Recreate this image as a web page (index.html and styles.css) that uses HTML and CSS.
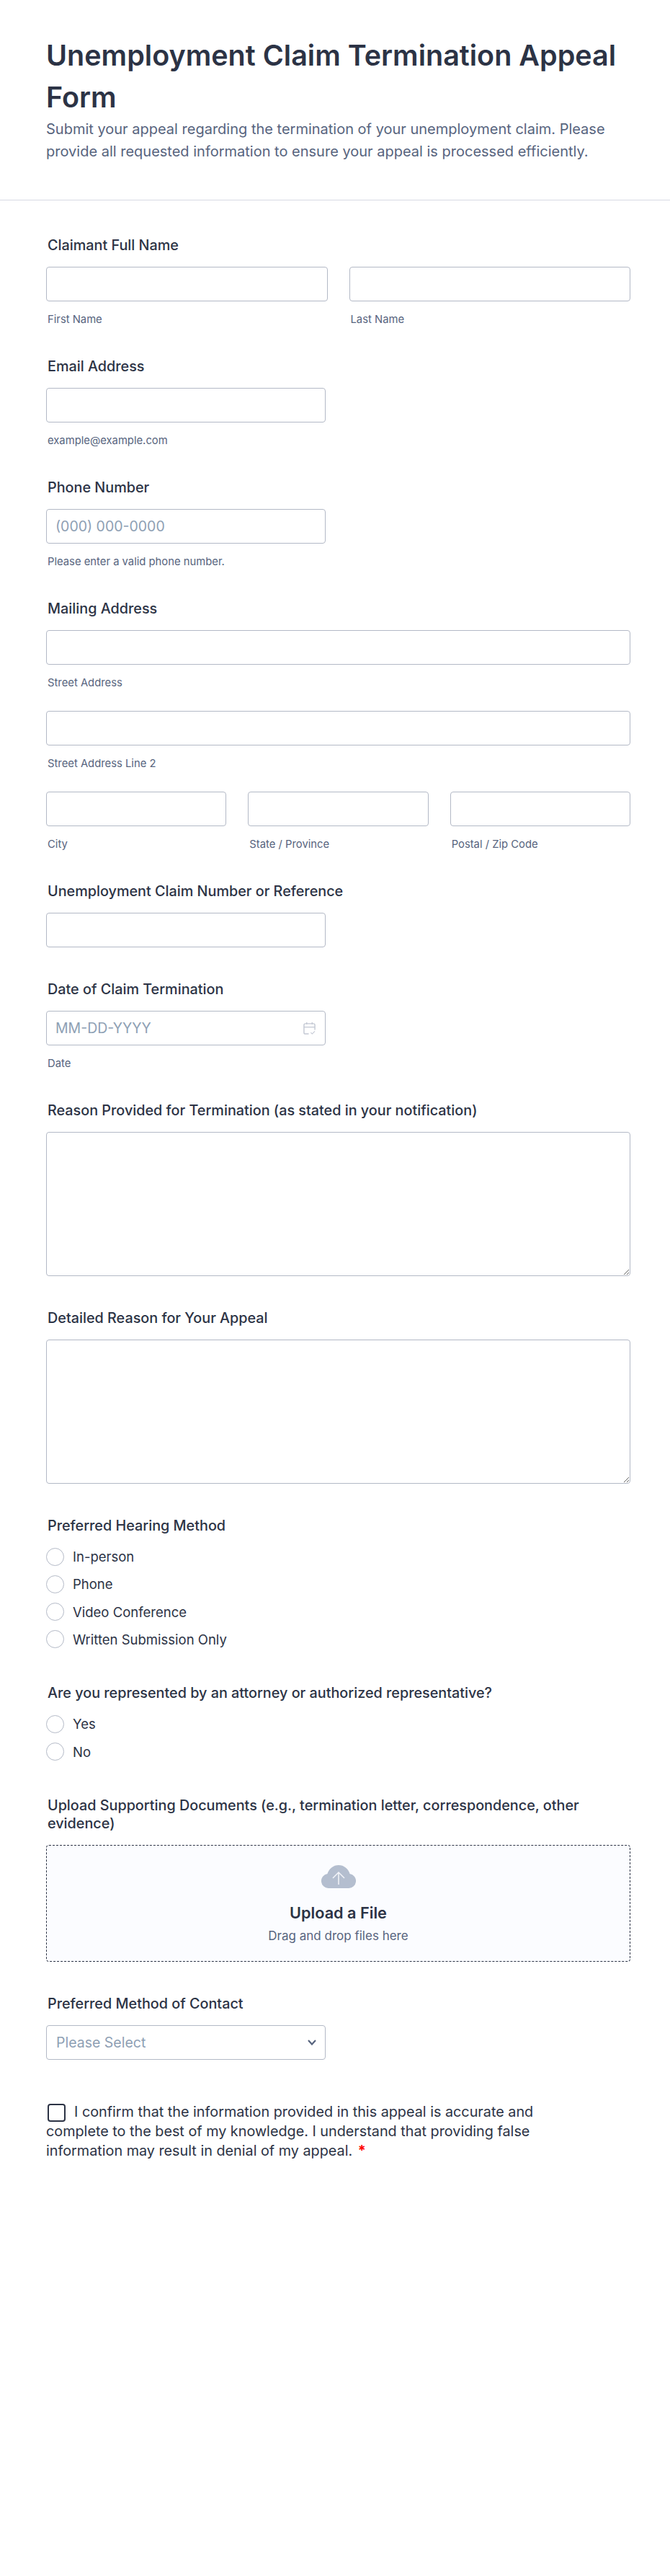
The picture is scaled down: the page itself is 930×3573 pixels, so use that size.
FILE: index.html
```html
<!DOCTYPE html>
<html lang="en">
<head>
<meta charset="utf-8">
<title>Unemployment Claim Termination Appeal Form</title>
<link rel="stylesheet" href="styles.css">
</head>
<body>
<header class="head">
  <h1 class="title">Unemployment Claim Termination Appeal Form</h1>
  <p class="desc">Submit your appeal regarding the termination of your unemployment claim. Please provide all requested information to ensure your appeal is processed efficiently.</p>
</header>
<form class="form">
  <div class="field">
    <label class="label">Claimant Full Name</label>
    <div class="row">
      <div class="col"><input class="input" type="text"><span class="sub">First Name</span></div>
      <div class="col"><input class="input" type="text"><span class="sub">Last Name</span></div>
    </div>
  </div>
  <div class="field">
    <label class="label">Email Address</label>
    <input class="input half" type="text"><span class="sub">example@example.com</span>
  </div>
  <div class="field">
    <label class="label">Phone Number</label>
    <input class="input half" type="text" placeholder="(000) 000-0000"><span class="sub">Please enter a valid phone number.</span>
  </div>
  <div class="field">
    <label class="label">Mailing Address</label>
    <div class="stack">
      <div class="col"><input class="input" type="text"><span class="sub">Street Address</span></div>
      <div class="col"><input class="input" type="text"><span class="sub">Street Address Line 2</span></div>
      <div class="row">
        <div class="col"><input class="input" type="text"><span class="sub">City</span></div>
        <div class="col"><input class="input" type="text"><span class="sub">State / Province</span></div>
        <div class="col"><input class="input" type="text"><span class="sub">Postal / Zip Code</span></div>
      </div>
    </div>
  </div>
  <div class="field">
    <label class="label">Unemployment Claim Number or Reference</label>
    <input class="input half" type="text">
  </div>
  <div class="field">
    <label class="label">Date of Claim Termination</label>
    <div class="wrap half">
      <input class="input" type="text" placeholder="MM-DD-YYYY">
      <svg class="cal" width="17" height="19" viewBox="0 0 18 20" fill="none" stroke="#c3c8d3" stroke-width="1.500" aria-hidden="true">
        <path d="M8 18H3a2 2 0 0 1-2-2V5a2 2 0 0 1 2-2h12a2 2 0 0 1 2 2v7"/>
        <path d="M1 8h16M5 1v3M13 1v3"/>
        <path d="M11 16l2 2 4-4" stroke-width="1.200"/>
      </svg>
    </div>
    <span class="sub">Date</span>
  </div>
  <div class="field">
    <label class="label">Reason Provided for Termination (as stated in your notification)</label>
    <textarea class="area"></textarea>
  </div>
  <div class="field">
    <label class="label">Detailed Reason for Your Appeal</label>
    <textarea class="area"></textarea>
  </div>
  <div class="field">
    <label class="label">Preferred Hearing Method</label>
    <div class="choices">
      <label class="choice"><input class="radio" type="radio" name="h">In-person</label>
      <label class="choice"><input class="radio" type="radio" name="h">Phone</label>
      <label class="choice"><input class="radio" type="radio" name="h">Video Conference</label>
      <label class="choice"><input class="radio" type="radio" name="h">Written Submission Only</label>
    </div>
  </div>
  <div class="field">
    <label class="label">Are you represented by an attorney or authorized representative?</label>
    <div class="choices">
      <label class="choice"><input class="radio" type="radio" name="r">Yes</label>
      <label class="choice"><input class="radio" type="radio" name="r">No</label>
    </div>
  </div>
  <div class="field">
    <label class="label">Upload Supporting Documents (e.g., termination letter, correspondence, other evidence)</label>
    <div class="drop">
      <svg class="cloud" width="48" height="32" viewBox="0 0 48 32" aria-hidden="true">
        <path d="M10 32A10 10 0 0 1 8.500 12.100A16 16 0 0 1 39.500 12.100A10 10 0 0 1 38 32Z" fill="#b4becf"/>
        <path d="M24 27V10M16 18L24 10L32 18" fill="none" stroke="#f3f5f9" stroke-width="1.500"/>
      </svg>
      <span class="drop-title">Upload a File</span>
      <span class="drop-sub">Drag and drop files here</span>
    </div>
  </div>
  <div class="field">
    <label class="label">Preferred Method of Contact</label>
    <div class="wrap half">
      <select class="input select"><option>Please Select</option></select>
      <svg class="chev" width="12" height="8" viewBox="0 0 12 8" fill="none" stroke="#57647e" stroke-width="2.200" aria-hidden="true"><path d="M1 1L6 6.500L11 1"/></svg>
    </div>
  </div>
  <label class="agree"><input class="check" type="checkbox">I confirm that the information provided in this appeal is accurate and complete to the best of my knowledge. I understand that providing false information may result in denial of my appeal. <span class="req">*</span></label>
</form>
</body>
</html>
```
FILE: styles.css
```css
* { box-sizing: border-box; }
html, body { margin: 0; padding: 0; }
body {
  width: 930px;
  min-height: 3573px;
  background: #fff;
  font-family: Inter, "Liberation Sans", sans-serif;
  color: #2c3345;
}
.head {
  padding: 48px 64px 0;
  height: 278px;
  border-bottom: 1px solid #d8dae3;
}
.title {
  margin: 0;
  font-size: 39.500px;
  line-height: 58px;
  font-weight: 600;
  color: #2c3345;
}
.desc {
  margin: 0;
  font-size: 20px;
  line-height: 31px;
  color: #57647e;
}
.form {
  padding: 50px 55px 0 64px;
  display: flex;
  flex-direction: column;
  gap: 46px;
}
.field { display: flex; flex-direction: column; }
.label {
  display: block;
  font-size: 19.800px;
  line-height: 25px;
  font-weight: 500;
  color: #2c3345;
  padding-left: 2px;
  margin-bottom: 17px;
}
.row { display: flex; gap: 30px; }
.col { flex: 1 1 0; display: flex; flex-direction: column; min-width: 0; }
.stack { display: flex; flex-direction: column; gap: 32px; }
.input {
  display: block;
  width: 100%;
  height: 48px;
  padding: 0 12px;
  border: 1px solid #b3b9c6;
  border-radius: 4px;
  background: #fff;
  font-family: inherit;
  font-size: 19.500px;
  color: #2c3345;
  outline: none;
}
.input::placeholder { color: #8ea0b4; opacity: 1; }
.half { width: 388px; }
.sub {
  display: block;
  margin-top: 18px;
  padding-left: 2px;
  font-size: 14.800px;
  line-height: 14px;
  color: #57647e;
}
.wrap { position: relative; }
.cal { position: absolute; right: 14px; top: 15px; }
.chev { position: absolute; right: 13px; top: 20px; }
.select {
  appearance: none;
  -webkit-appearance: none;
  padding-left: 13px;
  color: #8ea0b4;
}
.area {
  display: block;
  width: 100%;
  height: 200px;
  border: 1px solid #b3b9c6;
  border-radius: 4px;
  background: #fff;
  font-family: inherit;
  outline: none;
  resize: vertical;
}
.choices { display: flex; flex-direction: column; gap: 12.300px; padding-bottom: 3.600px; }
.choice {
  display: flex;
  align-items: center;
  gap: 12px;
  font-size: 18.500px;
  line-height: 26px;
  color: #2c3345;
}
.radio {
  appearance: none;
  -webkit-appearance: none;
  width: 25px;
  height: 25px;
  margin: 0;
  border: 1px solid #b3b9c6;
  border-radius: 50%;
  background: #fff;
}
.drop {
  height: 162px;
  display: flex;
  flex-direction: column;
  align-items: center;
  border: 1px dashed #2c3345;
  border-radius: 4px;
  background: #fbfcff;
  padding-top: 27px;
}
.cloud { display: block; }
.drop-title {
  margin-top: 19px;
  font-size: 21.700px;
  line-height: 30px;
  font-weight: 600;
}
.drop-sub {
  margin-top: 5px;
  font-size: 17px;
  line-height: 24px;
  color: #57647e;
}
.agree {
  display: block;
  width: 700px;
  margin-top: 13px;
  font-size: 19.800px;
  line-height: 27px;
}
.check {
  appearance: none;
  -webkit-appearance: none;
  width: 25px;
  height: 25px;
  margin: 0 12px 0 2px;
  vertical-align: middle;
  border: 2px solid #2c3345;
  border-radius: 4px;
  background: #fff;
}
.req { color: #f00; font-weight: 700; margin-left: 2px; }
```
